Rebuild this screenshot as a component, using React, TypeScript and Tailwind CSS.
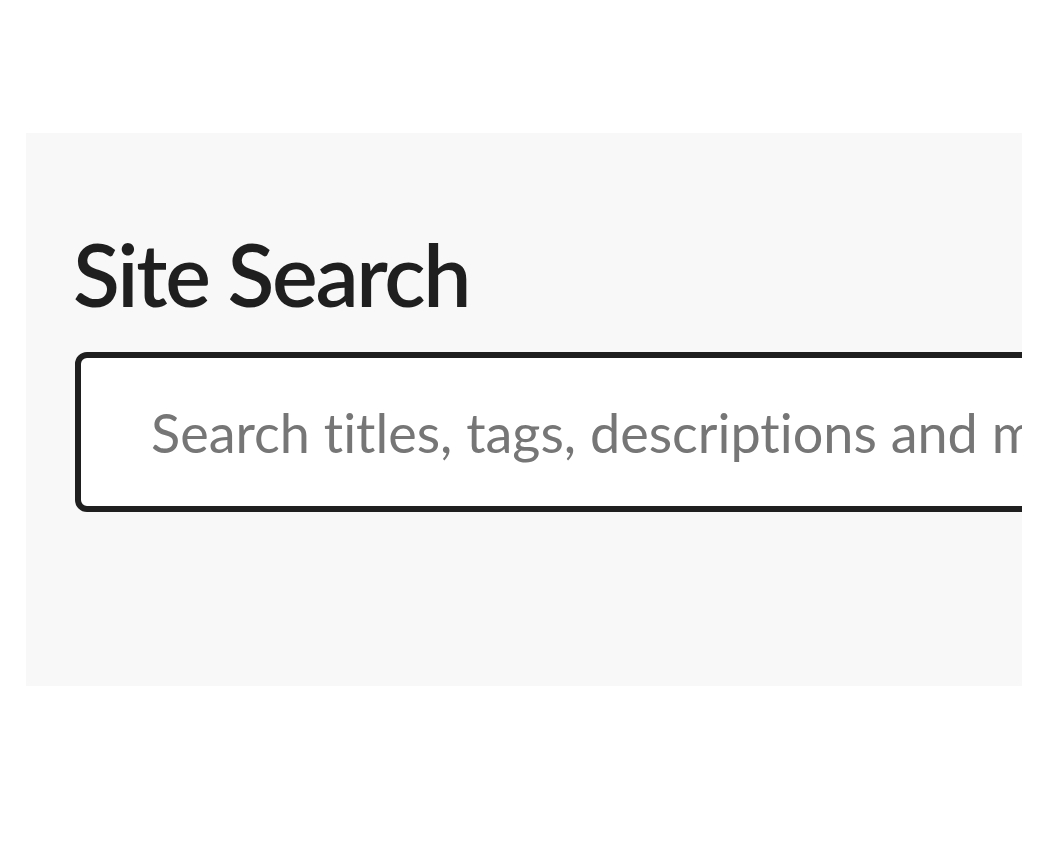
import { useEffect, useRef } from 'react'

const SearchPanel = () => {
  const inputRef = useRef<HTMLInputElement>(null)

  useEffect(() => {
    inputRef.current?.focus({ preventScroll: true })
  }, [])

  return (
    <section className="w-[996px] h-[553px] bg-[#f8f8f8] overflow-clip pl-[49px] pt-[91px]">
      <h1 className="-ml-[2px] text-[86px] leading-[100px] font-semibold text-[#1f1f1f] tracking-[-2.3px]">Site Search</h1>
      <div className="mt-[28px] w-[1100px] h-[160px] bg-white border-[6px] border-[#1f1f1f] rounded-[12px] flex items-center pl-[70px]">
        <input
          ref={inputRef}
          type="text"
          placeholder="Search titles, tags, descriptions and more"
          className="w-full bg-transparent outline-none text-[54px] text-[#1f1f1f] placeholder:text-[#767676] caret-[#1f1f1f] [font-variant-ligatures:none]"
          style={{ fontFamily: 'Lato, sans-serif' }}
        />
      </div>
    </section>
  )
}

const App = () => {
  return (
    <div className="min-h-screen bg-white pl-[26px] pt-[133px] [font-variant-ligatures:none]" style={{ fontFamily: 'Lato, sans-serif' }}>
      <SearchPanel />
    </div>
  )
}

export default App
